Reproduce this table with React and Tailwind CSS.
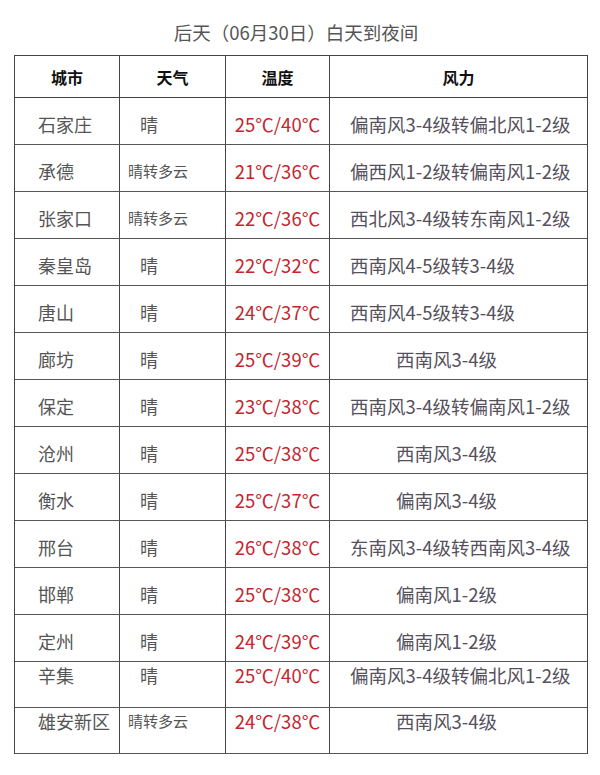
import React from "react";

const rows = [
  ["石家庄", "晴", "25℃/40℃", "偏南风3-4级转偏北风1-2级"],
  ["承德", "晴转多云", "21℃/36℃", "偏西风1-2级转偏南风1-2级"],
  ["张家口", "晴转多云", "22℃/36℃", "西北风3-4级转东南风1-2级"],
  ["秦皇岛", "晴", "22℃/32℃", "西南风4-5级转3-4级"],
  ["唐山", "晴", "24℃/37℃", "西南风4-5级转3-4级"],
  ["廊坊", "晴", "25℃/39℃", "西南风3-4级"],
  ["保定", "晴", "23℃/38℃", "西南风3-4级转偏南风1-2级"],
  ["沧州", "晴", "25℃/38℃", "西南风3-4级"],
  ["衡水", "晴", "25℃/37℃", "偏南风3-4级"],
  ["邢台", "晴", "26℃/38℃", "东南风3-4级转西南风3-4级"],
  ["邯郸", "晴", "25℃/38℃", "偏南风1-2级"],
  ["定州", "晴", "24℃/39℃", "偏南风1-2级"],
  ["辛集", "晴", "25℃/40℃", "偏南风3-4级转偏北风1-2级"],
  ["雄安新区", "晴转多云", "24℃/38℃", "西南风3-4级"],
];

const font = { fontFamily: '"Noto Sans CJK SC", "Noto Sans", sans-serif' };

function Row({ r, i }) {
  const last = i >= 12;
  const long = r[3].length > 8;
  const multi = r[1].length > 1;
  const align = last ? "items-start pt-0" : "items-center pt-[6px]";
  return (
    <div
      className={`grid grid-cols-[105px_106px_104px_1fr] border-b border-[#555] ${
        last ? "h-[46px]" : "h-[47px]"
      }`}
    >
      <div className={`flex ${align} border-r border-[#444] pl-[23px] text-[18px] leading-[26px] text-[#555]`}>
        {r[0]}
      </div>
      <div
        className={`flex ${align} border-r border-[#444] text-[#555] ${
          multi ? "pl-[8px] text-[15px] leading-[26px]" : "pl-[20px] text-[18px] leading-[26px]"
        }`}
      >
        {r[1]}
      </div>
      <div className={`flex ${align} justify-center border-r border-[#444] text-[18.5px] leading-[26px] text-[#c4262e]`}>
        {r[2]}
      </div>
      <div
        className={`flex ${align} text-[18.5px] leading-[26px] text-[#55505c] ${
          long ? "pl-[20px]" : "pl-[66px]"
        }`}
      >
        {r[3]}
      </div>
    </div>
  );
}

export default function App() {
  return (
    <div className="w-[600px] h-[775px] bg-white" style={font}>
      <div className="h-[55px] flex items-center justify-center pt-[10px] pr-[8px] text-[18.5px] text-[#555]">
        后天（06月30日）白天到夜间
      </div>
      <div className="ml-[14px] w-[574px] border-l border-r border-t border-[#444]">
        <div className="grid grid-cols-[105px_106px_104px_1fr] h-[42px] border-b border-[#444] text-[16px] font-bold text-[#111]">
          <div className="flex items-center justify-center border-r border-[#444]">城市</div>
          <div className="flex items-center justify-center border-r border-[#444]">天气</div>
          <div className="flex items-center justify-center border-r border-[#444]">温度</div>
          <div className="flex items-center justify-center">风力</div>
        </div>
        {rows.map((r, i) => (
          <Row key={i} r={r} i={i} />
        ))}
      </div>
    </div>
  );
}
